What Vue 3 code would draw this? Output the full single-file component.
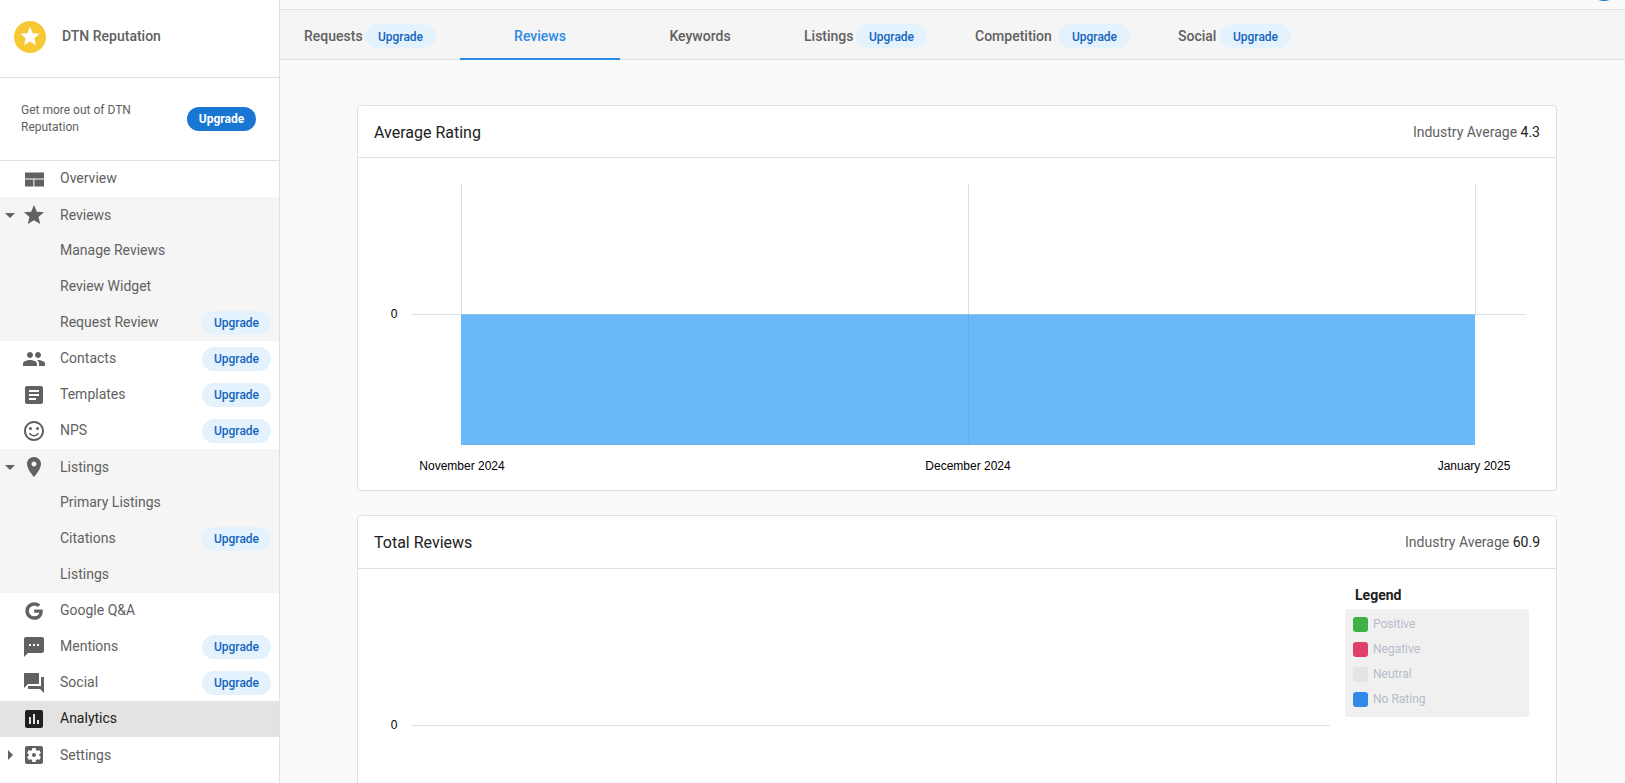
<script setup>
const icons = {
  quilt: 'M3 5.5h19v6H3zM3 12.5h8.4v7H3zM12.4 12.5H22v7h-9.6z',
  star: 'M12 17.27L18.18 21l-1.64-7.03L22 9.24l-7.19-.61L12 2 9.19 8.63 2 9.24l5.46 4.73L5.82 21z',
  people: 'M16 11c1.66 0 2.99-1.34 2.99-3S17.66 5 16 5c-1.66 0-3 1.34-3 3s1.34 3 3 3zm-8 0c1.66 0 2.99-1.34 2.99-3S9.66 5 8 5C6.34 5 5 6.34 5 8s1.34 3 3 3zm0 2c-2.33 0-7 1.17-7 3.5V19h14v-2.5c0-2.33-4.67-3.5-7-3.5zm8 0c-.29 0-.62.02-.97.05 1.16.84 1.97 1.97 1.97 3.45V19h6v-2.5c0-2.33-4.67-3.5-7-3.5z',
  doc: 'M19 3H5c-1.1 0-2 .9-2 2v14c0 1.1.9 2 2 2h14c1.1 0 2-.9 2-2V5c0-1.1-.9-2-2-2zm-5 14H7v-2h7v2zm3-4H7v-2h10v2zm0-4H7V7h10v2z',
  smile: 'M11.99 2C6.47 2 2 6.48 2 12s4.47 10 9.99 10C17.52 22 22 17.52 22 12S17.52 2 11.99 2zM12 20c-4.42 0-8-3.58-8-8s3.58-8 8-8 8 3.58 8 8-3.58 8-8 8zM15.5 8a1.5 1.5 0 1 1 0 3 1.5 1.5 0 0 1 0-3zM8.5 8a1.5 1.5 0 1 1 0 3 1.5 1.5 0 0 1 0-3zM12 16c-1.48 0-2.75-.81-3.45-2H6.88c.8 2.05 2.79 3.5 5.12 3.5s4.32-1.45 5.12-3.5h-1.67c-.7 1.19-1.97 2-3.45 2z',
  place: 'M12 2C8.13 2 5 5.13 5 9c0 5.25 7 13 7 13s7-7.75 7-13c0-3.87-3.13-7-7-7zm0 9.5c-1.38 0-2.5-1.12-2.5-2.5s1.12-2.5 2.5-2.5 2.5 1.12 2.5 2.5-1.12 2.5-2.5 2.5z',
  google: 'M12.2 10.4v3.3h5.1c-.4 2.3-2.3 3.6-5 3.6-3 0-5.4-2.4-5.4-5.3s2.4-5.3 5.4-5.3c1.5 0 2.7.5 3.6 1.4l2.5-2.5C16.9 4.1 14.8 3.2 12.3 3.2 7.4 3.2 3.4 7.1 3.4 12s4 8.8 8.9 8.8c5.1 0 8.5-3.6 8.5-8.6 0-.6-.1-1.2-.2-1.8z',
  sms: 'M20 2H4c-1.1 0-1.99.9-1.99 2L2 22l4-4h14c1.1 0 2-.9 2-2V4c0-1.1-.9-2-2-2zM9 11H7V9h2v2zm4 0h-2V9h2v2zm4 0h-2V9h2v2z',
  forum: 'M21 6h-2v9H6v2c0 .55.45 1 1 1h11l4 4V7c0-.55-.45-1-1-1zm-4 6V3c0-.55-.45-1-1-1H3c-.55 0-1 .45-1 1v14l4-4h10c.55 0 1-.45 1-1z',
  chart: 'M19 3H5c-1.1 0-2 .9-2 2v14c0 1.1.9 2 2 2h14c1.1 0 2-.9 2-2V5c0-1.1-.9-2-2-2zM9 17H7v-7h2v7zm4 0h-2V7h2v10zm4 0h-2v-4h2v4z',
  gear: 'M12 10c-1.1 0-2 .9-2 2s.9 2 2 2 2-.9 2-2-.9-2-2-2zm7-7H5c-1.11 0-2 .9-2 2v14c0 1.1.89 2 2 2h14c1.11 0 2-.9 2-2V5c0-1.1-.89-2-2-2zm-1.75 9c0 .23-.02.46-.05.68l1.48 1.16c.13.11.17.3.08.45l-1.4 2.42c-.09.15-.27.21-.43.15l-1.74-.7c-.36.28-.76.51-1.18.69l-.26 1.85c-.03.17-.18.3-.35.3h-2.8c-.17 0-.32-.13-.35-.29l-.26-1.85c-.43-.18-.82-.41-1.18-.69l-1.74.7c-.16.06-.34 0-.43-.15l-1.4-2.42c-.09-.15-.05-.34.08-.45l1.48-1.16c-.03-.23-.05-.46-.05-.69 0-.23.02-.46.05-.68l-1.48-1.16c-.13-.11-.17-.3-.08-.45l1.4-2.42c.09-.15.27-.21.43-.15l1.74.7c.36-.28.76-.51 1.18-.69l.26-1.85c.03-.17.18-.3.35-.3h2.8c.17 0 .32.13.35.29l.26 1.85c.43.18.82.41 1.18.69l1.74-.7c.16-.06.34 0 .43.15l1.4 2.42c.09.15.05.34-.08.45l-1.48 1.16c.03.23.05.46.05.69z'
}

const nav = [
  { label: 'Overview', icon: 'quilt' },
  { label: 'Reviews', icon: 'star', arrow: 'down', grey: true },
  { label: 'Manage Reviews', grey: true },
  { label: 'Review Widget', grey: true },
  { label: 'Request Review', grey: true, upgrade: true },
  { label: 'Contacts', icon: 'people', upgrade: true },
  { label: 'Templates', icon: 'doc', upgrade: true },
  { label: 'NPS', icon: 'smile', upgrade: true },
  { label: 'Listings', icon: 'place', arrow: 'down', grey: true },
  { label: 'Primary Listings', grey: true },
  { label: 'Citations', grey: true, upgrade: true },
  { label: 'Listings', grey: true },
  { label: 'Google Q&A', icon: 'google' },
  { label: 'Mentions', icon: 'sms', upgrade: true },
  { label: 'Social', icon: 'forum', upgrade: true },
  { label: 'Analytics', icon: 'chart', active: true },
  { label: 'Settings', icon: 'gear', arrow: 'right' }
]

const tabs = [
  { label: 'Requests', upgrade: true, labelWidth: 61 },
  { label: 'Reviews', active: true },
  { label: 'Keywords' },
  { label: 'Listings', upgrade: true, labelWidth: 52 },
  { label: 'Competition', upgrade: true, labelWidth: 84 },
  { label: 'Social', upgrade: true, labelWidth: 42 }
]

const legend = [
  { label: 'Positive', color: '#3fb246' },
  { label: 'Negative', color: '#e13f6d' },
  { label: 'Neutral', color: '#e4e4e4' },
  { label: 'No Rating', color: '#3389e8' }
]
</script>

<template>
  <div class="app">
    <aside class="sidebar">
      <div class="brand">
        <svg class="logo" viewBox="0 0 32 32" width="32" height="32">
          <circle cx="16" cy="16" r="16" fill="#f6c932" />
          <path transform="translate(4.36 3.8) scale(.97)" :d="icons.star" fill="#fff" />
        </svg>
        <span class="brand-name">DTN Reputation</span>
      </div>
      <div class="promo">
        <span class="promo-text">Get more out of DTN Reputation</span>
        <span class="promo-btn">Upgrade</span>
      </div>
      <nav class="nav">
        <div
          v-for="(item, i) in nav"
          :key="i"
          class="nav-row"
          :class="{ grey: item.grey, active: item.active, parent: item.arrow }"
        >
          <span class="arrow-slot">
            <span v-if="item.arrow" :class="item.arrow === 'down' ? 'arrow-down' : 'arrow-right'"></span>
          </span>
          <span class="icon-slot">
            <svg v-if="item.icon" viewBox="0 0 24 24" width="24" height="24" class="nav-icon">
              <path :d="icons[item.icon]" />
            </svg>
          </span>
          <span class="nav-label">{{ item.label }}</span>
          <span v-if="item.upgrade" class="pill">Upgrade</span>
        </div>
      </nav>
    </aside>

    <main class="main">
      <div class="topstrip"><span class="avatar"></span></div>
      <div class="tabs">
        <div
          v-for="tab in tabs"
          :key="tab.label"
          class="tab"
          :class="{ 'tab-active': tab.active, 'tab-plain': !tab.upgrade }"
        >
          <span :style="tab.labelWidth ? { width: tab.labelWidth + 'px' } : null">{{ tab.label }}</span>
          <span v-if="tab.upgrade" class="pill tab-pill">Upgrade</span>
        </div>
      </div>

      <div class="content">
        <section class="card">
          <header class="card-head">
            <h2 class="card-title">Average Rating</h2>
            <div class="avg">Industry Average <span class="avg-val">4.3</span></div>
          </header>
          <svg class="chart" viewBox="358 158 1197 332" width="1197" height="332">
            <rect x="461" y="314" width="1014" height="131" fill="#6ab8f5" />
            <g stroke="#e0e0e0" stroke-width="1">
              <line x1="411" y1="314.5" x2="1526" y2="314.5" />
              <line x1="461.5" y1="184" x2="461.5" y2="314" />
              <line x1="968.5" y1="184" x2="968.5" y2="314" />
              <line x1="1475.5" y1="184" x2="1475.5" y2="314" />
            </g>
            <line x1="968.5" y1="315" x2="968.5" y2="445" stroke="#62aeea" stroke-width="1" />
            <line x1="461" y1="314.5" x2="1475" y2="314.5" stroke="#8fc6ef" stroke-width="1" />
            <g class="chart-text">
              <text x="394" y="318" text-anchor="middle">0</text>
              <text x="462" y="470" text-anchor="middle">November 2024</text>
              <text x="968" y="470" text-anchor="middle">December 2024</text>
              <text x="1474" y="470" text-anchor="middle">January 2025</text>
            </g>
          </svg>
        </section>

        <section class="card card-second">
          <header class="card-head card-head-tall">
            <h2 class="card-title">Total Reviews</h2>
            <div class="avg">Industry Average <span class="avg-val">60.9</span></div>
          </header>
          <div class="card-row">
            <svg class="chart chart-grow" viewBox="358 569 987 220" width="987" height="220">
              <line x1="411" y1="725.5" x2="1330" y2="725.5" stroke="#e0e0e0" stroke-width="1" />
              <g class="chart-text">
                <text x="394" y="729" text-anchor="middle">0</text>
              </g>
            </svg>
            <div class="legend">
              <div class="legend-title">Legend</div>
              <ul class="legend-box">
                <li v-for="l in legend" :key="l.label" class="legend-item">
                  <span class="swatch" :style="{ background: l.color }"></span>
                  <span>{{ l.label }}</span>
                </li>
              </ul>
            </div>
          </div>
        </section>
      </div>
    </main>
  </div>
</template>

<style>
html, body { margin: 0; overflow: hidden; }
</style>

<style scoped>
.app {
  display: flex;
  height: 783px;
  overflow: hidden;
  font-family: Roboto, "Liberation Sans", sans-serif;
  font-size: 14px;
  color: #616161;
  background: #fafafa;
}
.sidebar {
  flex: 0 0 280px;
  box-sizing: border-box;
  background: #fff;
  border-right: 1px solid #e0e0e0;
}
.brand {
  height: 78px;
  box-sizing: border-box;
  border-bottom: 1px solid #e0e0e0;
  padding: 0 0 4px 14px;
  display: flex;
  align-items: center;
}
.logo { flex: none; }
.brand-name {
  margin: 0 0 1px 16px;
  font-weight: 500;
  color: #616161;
}
.promo {
  height: 83px;
  box-sizing: border-box;
  border-bottom: 1px solid #e0e0e0;
  padding: 0 23px 0 21px;
  display: flex;
  align-items: center;
  justify-content: space-between;
}
.promo-text {
  width: 130px;
  font-size: 12px;
  line-height: 17px;
  color: #616161;
}
.promo-btn {
  width: 69px;
  height: 24px;
  line-height: 24px;
  text-align: center;
  border-radius: 12px;
  background: #1976d2;
  color: #fff;
  font-size: 12px;
  font-weight: 700;
}
.nav-row {
  height: 36px;
  display: flex;
  align-items: center;
}
.nav-row.grey { background: #f5f5f5; }
.nav-row.active { background: #e3e3e3; color: #212121; }
.arrow-slot {
  flex: 0 0 22px;
  display: flex;
  justify-content: center;
  padding-right: 2px;
  box-sizing: border-box;
}
.arrow-down {
  width: 0;
  height: 0;
  border-left: 5px solid transparent;
  border-right: 5px solid transparent;
  border-top: 5px solid #616161;
}
.arrow-right {
  width: 0;
  height: 0;
  border-top: 5px solid transparent;
  border-bottom: 5px solid transparent;
  border-left: 5px solid #616161;
}
.icon-slot {
  flex: 0 0 24px;
  height: 24px;
  margin-right: 14px;
}
.nav-icon { display: block; fill: #616161; }
.active .nav-icon { fill: #212121; }
.nav-label { flex: 1; margin-bottom: 2px; }
.parent .nav-label { margin-bottom: 0; }
.pill {
  flex: none;
  width: 69px;
  height: 24px;
  line-height: 24px;
  text-align: center;
  margin-right: 8px;
  border-radius: 12px;
  background: #e3f2fd;
  color: #1565c0;
  font-size: 12px;
  font-weight: 500;
}
.main {
  flex: 1;
  min-width: 0;
  display: flex;
  flex-direction: column;
}
.topstrip {
  position: relative;
  height: 9px;
  flex: none;
  overflow: hidden;
  border-bottom: 1px solid #e0e0e0;
}
.avatar {
  position: absolute;
  right: 6px;
  top: -29px;
  width: 30px;
  height: 30px;
  border-radius: 50%;
  background: #1976d2;
}
.tabs {
  flex: none;
  height: 49px;
  display: flex;
  background: #f5f5f5;
  border-bottom: 1px solid #e0e0e0;
}
.tab {
  height: 50px;
  box-sizing: border-box;
  padding: 2px 24px 0;
  display: flex;
  align-items: center;
  font-weight: 500;
  color: #616161;
}
.tab-plain {
  width: 160px;
  justify-content: center;
}
.tab-active {
  color: #2b8ae6;
  box-shadow: inset 0 -2px 0 #2b8ae6;
}
.tab-pill {
  width: 71px;
  margin: 0;
  line-height: 26px;
}
.content {
  flex: 1;
  min-height: 0;
  padding: 45px 68px 0 77px;
  overflow: hidden;
}
.card {
  background: #fff;
  border: 1px solid #e0e0e0;
  border-radius: 4px;
}
.card-second { margin-top: 24px; }
.card-head {
  height: 52px;
  box-sizing: border-box;
  border-bottom: 1px solid #e0e0e0;
  padding: 0 16px;
  display: flex;
  align-items: center;
  justify-content: space-between;
}
.card-head-tall { height: 53px; }
.card-title {
  margin: 1px 0 0;
  font-size: 16px;
  font-weight: 400;
  color: #212121;
}
.avg { color: #616161; }
.avg-val { color: #212121; }
.chart { display: block; }
.chart-text text {
  font-family: "Liberation Sans", Arial, sans-serif;
  font-size: 12px;
  fill: #000;
}
.card-row { display: flex; }
.chart-grow { flex: none; }
.legend { margin-top: 17px; width: 184px; }
.legend-title {
  margin-left: 10px;
  font-weight: 700;
  color: #212121;
  line-height: 18px;
}
.legend-box {
  list-style: none;
  margin: 5px 0 0;
  padding: 8px 8px 0;
  background: #f0f0f0;
  border-radius: 3px;
}
.legend-item {
  height: 25px;
  display: flex;
  align-items: flex-start;
  gap: 5px;
  font-size: 12px;
  line-height: 15px;
  color: #b5bccb;
}
.swatch {
  flex: none;
  width: 15px;
  height: 15px;
  border-radius: 3px;
}
</style>
